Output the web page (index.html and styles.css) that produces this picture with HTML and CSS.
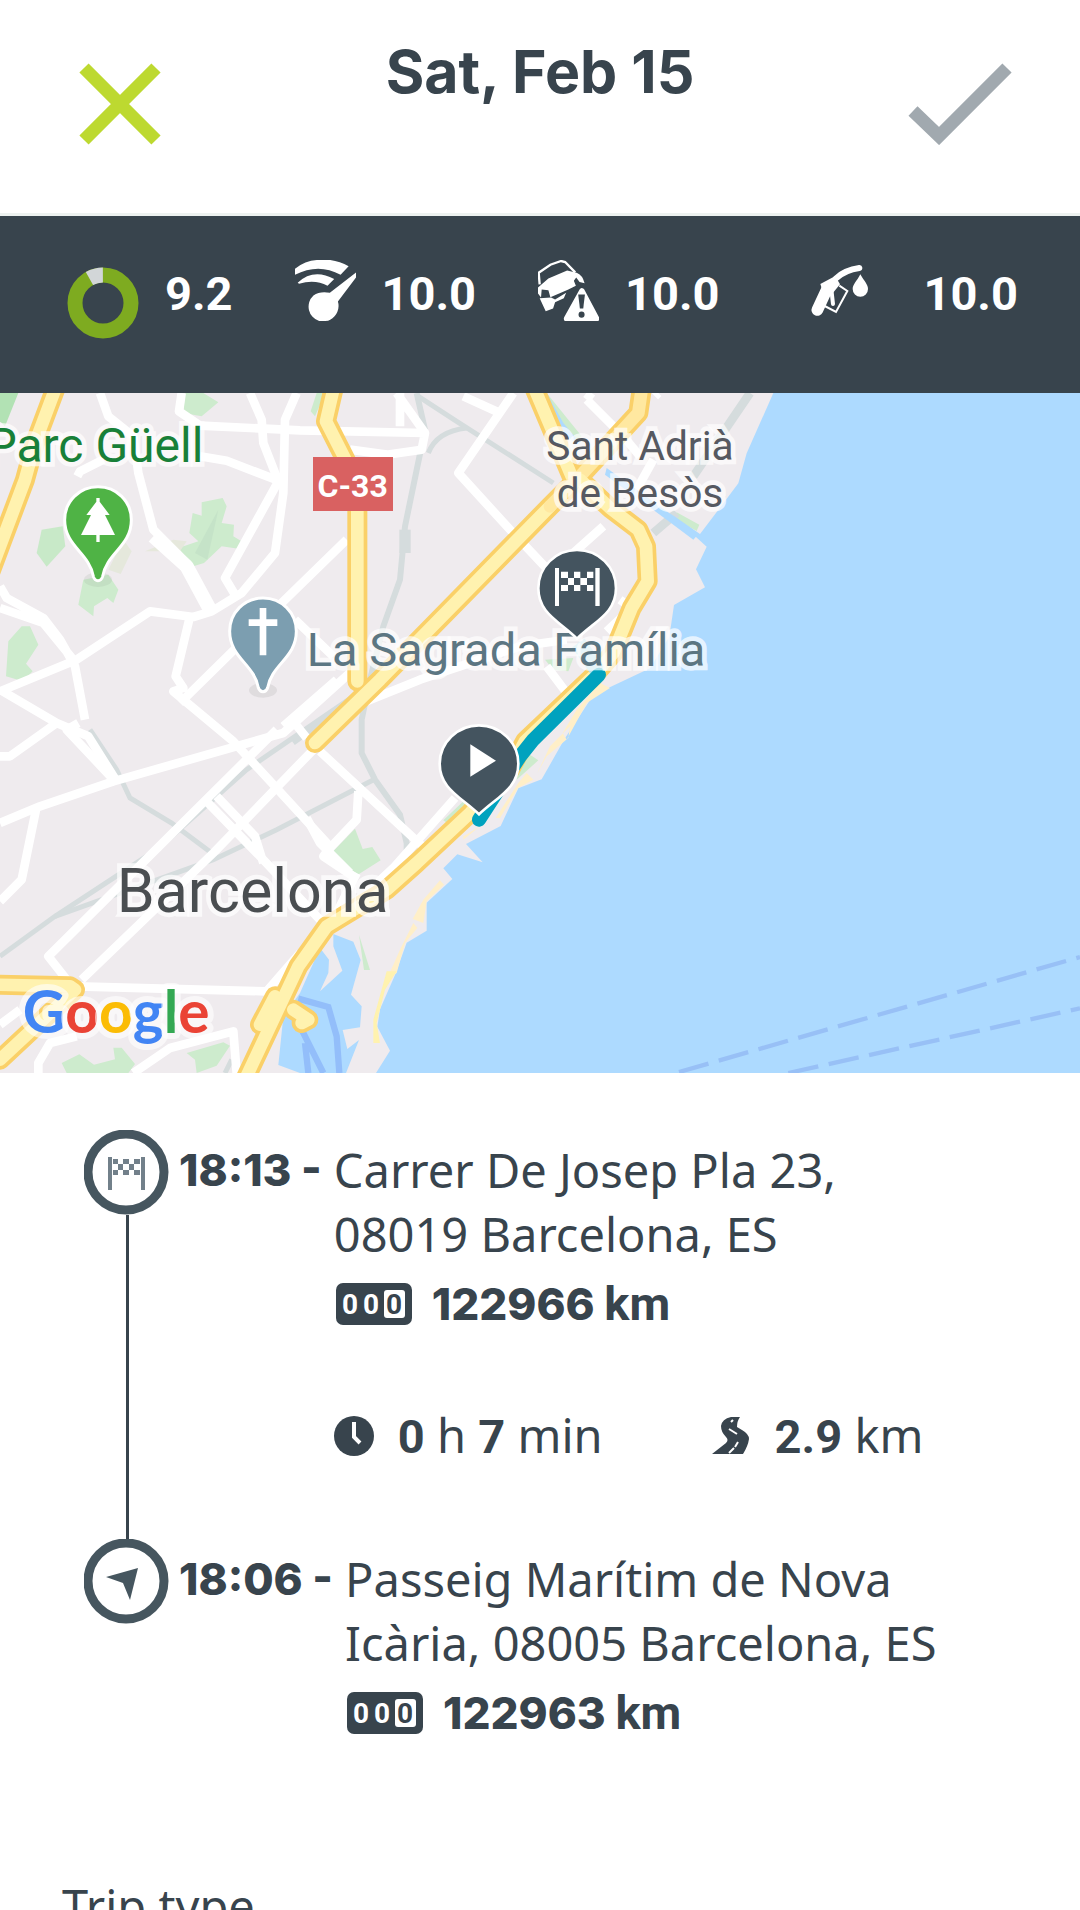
FILE: index.html
```html
<!DOCTYPE html>
<html lang="en">
<head>
  <meta charset="UTF-8">
  <meta name="viewport" content="width=device-width, initial-scale=1.0">
  <title>Sat, Feb 15</title>
  <link rel="stylesheet" href="styles.css">
</head>
<body>
  <div class="screen">

    <header class="topbar">
      <button class="icon-btn" type="button" aria-label="Close">
        <svg viewBox="0 0 104 82"><path d="M16 5L88 77M88 5L16 77" stroke="#bdd930" stroke-width="13" fill="none"/></svg>
      </button>
      <h1>Sat, Feb 15</h1>
      <button class="icon-btn" type="button" aria-label="Confirm">
        <svg viewBox="0 0 104 82"><path d="M5 48L31 73L99 5" stroke="#a1a9af" stroke-width="13" fill="none"/></svg>
      </button>
    </header>

    <section class="scores">
      <div class="score">
        <svg class="donut" viewBox="0 0 72 72">
          <circle cx="36" cy="36" r="28" fill="none" stroke="#7eab20" stroke-width="15"/>
          <circle cx="36" cy="36" r="28" fill="none" stroke="#d2d6d8" stroke-width="15" pathLength="100" stroke-dasharray="8 92" transform="rotate(-119 36 36)"/>
        </svg>
        <span>9.2</span>
      </div>
      <div class="score">
        <svg class="score-icon" viewBox="100 60 182 182" fill="#fff">
          <path d="M100 86Q130 62 165 60H205Q235 64 260 79L236 104Q170 68 100 104z"/>
          <path d="M108 128Q155 84 217 117L197 137Q160 117 112 131z"/>
          <path d="M282 97V112L228 184A46 46 0 0 1 205 238Q200 242 190 242H172A45 45 0 0 1 155 166Q175 152 204 158z"/>
        </svg>
        <span>10.0</span>
      </div>
      <div class="score">
        <svg class="score-icon" viewBox="831 60 182 182" fill="#fff">
          <path d="M836 133L833 98L868 74L900 63L912 66L942 97" fill="none" stroke="#fff" stroke-width="7"/>
          <path d="M831 142L862 115L918 91L946 98Q964 105 970 129L955 126L945 112L938 122L944 137L920 149L868 171L862 150L842 148L840 172L831 160z"/>
          <path d="M836 174L870 172L882 178L915 158L908 174L882 186L876 205L854 213z"/>
          <path d="M962 152L1006 235H916z" stroke="#fff" stroke-width="16" stroke-linejoin="round"/>
          <path d="M951 163H971L966 205H956z" fill="#38444d"/>
          <circle cx="961" cy="223" r="9" fill="#38444d"/>
        </svg>
        <span>10.0</span>
      </div>
      <div class="score">
        <svg class="fuel-icon" viewBox="3 60 348 183" fill="#fff">
          <path d="M112 210L142 145" stroke="#fff" stroke-width="35" stroke-linecap="round"/>
          <path d="M121 132L166 108L180 133L158 160L130 160z"/>
          <path d="M168 115Q195 90 238 84" fill="none" stroke="#fff" stroke-width="18" stroke-linecap="round"/>
          <path d="M178 137L202 153L168 216L134 198" fill="none" stroke="#fff" stroke-width="6"/>
          <path d="M154 148L159 192" fill="none" stroke="#fff" stroke-width="12" stroke-linecap="round"/>
          <path d="M241 103C253 124 264 134 264 147a23 23 0 0 1-46 0C218 134 230 124 241 103z"/>
        </svg>
        <span>10.0</span>
      </div>
    </section>

    <svg class="map" viewBox="0 0 3240 2040" role="img" aria-label="Trip route in Barcelona">
      <rect width="3240" height="2040" fill="#efebee"/>

      <!-- parks -->
      <g fill="#cdebcd">
        <path d="M0 0H55L15 100L0 85z" fill="#b2e2b4"/>
        <path d="M555 0H610L655 28L605 70L550 60z"/>
        <path d="M950 0H975L945 70L932 55z"/>
        <path d="M125 410L188 400L196 460L140 521L110 480z" fill="#c8e9c8"/>
        <path d="M605 328L668 315L680 340L665 390L702 395L700 430L733 450L715 467L665 460L612 510L580 520L535 465L595 445L568 420L578 360L605 368z"/>
        <path d="M655 350L622 500L585 480z" fill="#c5e3c8"/>
        <path d="M435 475L520 440L560 445L540 475z" fill="#e6e8dc"/>
        <path d="M370 440L395 475L362 543L325 530z" fill="#e5e8dc"/>
        <path d="M250 560L325 545L355 590L340 630L322 615L282 640L280 670L235 635z"/>
        <path d="M65 700H90L115 755L78 812L98 835L68 865L18 850L25 745z"/>
        <path d="M985 1390L1065 1307L1088 1368L1117 1362L1142 1402L1058 1455z"/>
        <path d="M185 2010L238 1984L282 2015L345 1999L340 1964H365L405 2013L385 2040H200z"/>
        <path d="M560 1980L670 1948L690 1958L650 2018L590 2040L585 2000z"/>
        <path d="M1077 1625L1110 1731H1092z"/>
        <path d="M1330 1282L1395 1220L1420 1245L1355 1300z"/>
        <path d="M1560 1110L1590 1085L1615 1102L1550 1160z"/>
        <path d="M2030 358L2098 395L2090 414L2020 375z"/>
        <path d="M1635 800L1720 795L1705 835L1660 830z"/>
        <path d="M1640 0L1745 130L1725 145L1640 20z"/>
      </g>

      <!-- railways -->
      <g fill="none" stroke="#d5dcdd" stroke-width="15">
        <path d="M1250 0L1275 110L1215 400L1200 560L1150 700L1110 860L1085 980V1080L1125 1160L1200 1265L1220 1350V1400" stroke-width="18"/>
        <path d="M1215 410V480" stroke-width="34"/>
        <path d="M1255 10L1370 85L1660 270"/>
        <path d="M1285 180Q1310 115 1400 105"/>
        <path d="M2250 0L2080 250M2030 360L1960 420" stroke-width="26"/>
        <path d="M0 1690L165 1570L470 1370L740 1130L1060 910"/>
        <path d="M165 1570L640 1400L830 1310L1125 1158"/>
        <path d="M270 1010L350 1130L390 1215L515 1290L655 1395"/>
        <path d="M880 1050L1060 920M675 2040L695 2000"/>
      </g>

      <!-- streets -->
      <g fill="none" stroke="#fff" stroke-width="26" stroke-linejoin="round">
        <path d="M300 0L325 70L400 130L415 240L460 410L560 510L630 650" />
        <path d="M460 430L560 520L630 650" stroke-width="42"/>
        <path d="M545 0L537 55L600 98L900 112L1275 120L1265 170L1160 185L1050 170"/>
        <path d="M750 0L785 80L790 150L835 265L675 555L705 605"/>
        <path d="M890 0L855 80L850 300L825 480L725 600L635 655L580 672L450 655L230 800L0 895"/>
        <path d="M600 190L680 203L840 265M232 250L240 235L310 200"/>
        <path d="M1040 440L850 625L540 930M570 670L527 850L550 885L520 895L700 1045L820 1175L985 1355"/>
        <path d="M1200 0V100M1190 0L1275 120M1390 10L1500 60"/>
        <path d="M1540 0L1375 240L1530 410L1700 590M1810 400L1720 480"/>
        <path d="M1760 20L1870 130L1920 190M1960 200L1910 290M1760 20L1775 0M1965 10L1975 0"/>
        <path d="M0 580L20 615L130 675L180 740L225 820L255 980M0 645L130 690L220 800M235 990L200 1010L350 1170"/>
        <path d="M0 890L170 990L265 1030L350 1165M170 990L30 1090H0M0 1290L120 1240L340 1165L850 1020L1060 830"/>
        <path d="M850 1000L1010 860M880 985L920 1035M1100 925L1260 860L1560 760L1700 740"/>
        <path d="M110 1240L65 1460L0 1525M830 1010L145 1690L200 1760M940 1070L640 1380L245 1760"/>
        <path d="M615 1220L780 1390L960 1580M650 1210L765 1330L790 1410M960 1075L1300 1390M1075 1195L1070 1280L985 1370L970 1390L1060 1450"/>
        <path d="M920 1275L960 1350L1050 1440M1365 1215L1180 1425L1100 1500M1070 1440L1000 1580M230 1780L800 1795L900 1680"/>
        <path d="M885 680L1000 790M1860 620L1895 645L1820 715M1640 820L1700 900M0 1895L60 1850M230 1930L150 1950L115 2010V2040M400 2040L510 1965L700 1915L710 2040"/>
      </g>

      <!-- sea, harbour and river -->
      <g fill="#addaff">
        <path d="M2320 0L2240 181L2215 271L2170 331L2100 423L2010 361L2120 461L2088 529L2115 583L2022 636L2008 731L1950 826L1780 906L1693 1039L1625 1159L1555 1186L1502 1299L1398 1353L1448 1408L1372 1384L1330 1426L1357 1458L1280 1529V1613L1220 1649L1185 1746L1140 1849L1132 1901L1170 1973L1128 2040H3240V0z"/>
        <path d="M1000 1623L1060 1646L1082 1701L1053 1805L1085 1840L1080 1903L1028 1911L1042 1968L1077 1941L1038 2040H900L835 2016L850 1870L900 1800L960 1665L987 1700L985 1740L960 1795L1027 1733L1000 1660z"/>
        <path d="M1628 0L1640 0L1690 90L1740 150L1725 155L1670 90zM1820 225L2000 355L2095 423L2080 440L2000 380L1815 245z"/>
      </g>
      <g fill="#ffefc8">
        <path d="M1710 1000L1650 1060L1612 1140L1640 1090L1705 1035zM1800 870L1830 885L1760 930L1700 1040L1688 1020L1730 950zM1555 1170L1580 1140L1600 1160L1555 1184L1500 1275H1487zM1390 1340L1390 1330L1440 1300zM1320 1462L1332 1475L1280 1525L1270 1590L1238 1578L1270 1520zM1240 1590L1252 1605L1215 1650L1190 1740L1160 1760L1200 1670z"/>
        <path d="M1160 1735H1190L1155 1790L1130 1890L1140 1950H1120V1880z" fill="#fff2af"/>
      </g>
      <path d="M895 1817L985 1842L1010 1930L1018 2040M905 1910L970 2040M915 1950L925 2040" fill="none" stroke="#93befa" stroke-width="19"/>
      <path d="M2037 2037L3240 1692M2365 2040L3240 1846" fill="none" stroke="#98c0f6" stroke-width="13" stroke-dasharray="92 32"/>

      <!-- motorways: casing, then fill -->
      <g fill="none" stroke="#fad068" stroke-width="60" stroke-linejoin="round" stroke-linecap="round">
        <path d="M165 -10L105 150L75 260L0 460L-30 540"/>
        <path d="M1000 -10L978 85L1072 270V865"/>
        <path d="M1605 -10L1715 250M1925 -10L1915 60L1740 250L1650 340L1140 860L945 1050"/>
        <path d="M1740 260L1830 345L1915 410L1938 460L1943 565L1895 645L1840 780L1780 850L1575 1045L1530 1130L1410 1260L1250 1410L1160 1490L980 1600L895 1720L735 2060"/>
        <path d="M-10 1775L210 1780L225 1790L0 2000"/>
        <path d="M825 1810L780 1895M880 1850L925 1880L905 1890"/>
      </g>
      <g fill="none" stroke="#fff2af" stroke-width="38" stroke-linejoin="round" stroke-linecap="round">
        <path d="M165 -10L105 150L75 260L0 460L-30 540"/>
        <path d="M1000 -10L978 85L1072 270V865"/>
        <path d="M1650 340L1140 860L945 1050M1605 -10L1715 250"/>
        <path d="M1925 -10L1915 60L1740 250L1650 340" stroke="#ffe8a0"/>
        <path d="M1740 260L1830 345L1915 410L1938 460L1943 565L1895 645L1840 780L1780 850L1575 1045L1530 1130L1410 1260L1250 1410L1160 1490L980 1600L895 1720L735 2060"/>
        <path d="M-10 1775L210 1780L225 1790L0 2000"/>
        <path d="M825 1810L780 1895M880 1850L925 1880L905 1890"/>
      </g>

      <!-- driven route, paler where it runs under the label -->
      <path d="M1735 750L1797 838" fill="none" stroke="#b2e1e9" stroke-width="46"/>
      <path d="M1797 845L1600 1040L1560 1090L1437 1280" fill="none" stroke="#00a2be" stroke-width="42" stroke-linecap="round" stroke-linejoin="round"/>

      <rect x="939" y="192" width="240" height="162" fill="#d96161"/>
      <text class="road-no" x="1058" y="311">C-33</text>

      <text class="label park" x="610" y="206">Parc Güell</text>
      <text class="label sight" x="920" y="818">La Sagrada Família</text>
      <text class="label town" x="1920" y="201">Sant Adrià</text>
      <text class="label town" x="1920" y="341">de Besòs</text>
      <text class="label city" x="350" y="1558">Barcelona</text>
      <text class="google" x="68" y="1919"><tspan fill="#4285f4">G</tspan><tspan fill="#ea4335">o</tspan><tspan fill="#fbbc05">o</tspan><tspan fill="#4285f4">g</tspan><tspan fill="#34a853">l</tspan><tspan fill="#ea4335">e</tspan></text>

      <!-- places -->
      <g stroke="#fff" stroke-width="9">
        <ellipse cx="294" cy="560" rx="42" ry="22" fill="#8a9a8a" opacity=".15" stroke="none"/>
        <path d="M294 281C238 281 194 325 194 381C194 460 268 480 280 550Q284 563 294 563T308 550C320 480 394 460 394 381C394 325 350 281 294 281z" fill="#4fb345"/>
        <path d="M289 315H299V326L329 366H315L345 426H299V447H289V426H243L273 366H259L289 326z" fill="#fff" stroke="none"/>
        <ellipse cx="789" cy="892" rx="42" ry="22" fill="#888" opacity=".15" stroke="none"/>
        <path d="M789 615C733 615 689 659 689 715C689 794 763 814 775 884Q779 896 789 896T803 884C815 814 889 794 889 715C889 659 845 615 789 615z" fill="#7c9eb0"/>
        <path d="M779 645H799V679H832V699H799V787H779V699H746V679H779z" fill="#fff" stroke="none"/>
      </g>

      <!-- trip end and start pins -->
      <g id="end-pin">
        <path d="M1731 471C1667 471 1615 522 1615 586C1615 661 1677 684 1731 737C1785 684 1848 661 1848 586C1848 522 1796 471 1731 471z" fill="#44545f" stroke="#fff" stroke-width="8"/>
        <path d="M1665 525H1677V639H1665zM1786 525H1799V639H1786zM1683 536H1704V555H1683zM1722 536H1741V555H1722zM1761 536H1780V555H1761zM1704 555H1722V576H1704zM1741 555H1761V576H1741zM1683 576H1704V594H1683zM1722 576H1741V594H1722zM1761 576H1780V594H1761z" fill="#fff"/>
      </g>
      <g id="start-pin">
        <path d="M1437 997C1373 997 1319 1048 1319 1112C1319 1187 1383 1212 1437 1264C1491 1212 1555 1187 1555 1112C1555 1048 1501 997 1437 997z" fill="#44545f" stroke="#fff" stroke-width="8"/>
        <path d="M1411 1054V1151L1488 1103z" fill="#fff"/>
      </g>
    </svg>

    <main class="trip">
      <div class="leg">
        <div class="rail">
          <svg class="rail-icon" viewBox="0 0 85 85">
            <circle cx="42" cy="42" r="38" fill="#fff" stroke="#46565f" stroke-width="9"/>
            <path d="M24 27h4v33h-4zM57 27h4v33h-4zM29 29h5v5h-5zM39 29h6v5h-6zM50 29h6v5h-6zM34 34h5v6h-5zM45 34h5v6h-5zM29 40h5v5h-5zM39 40h6v5h-6zM50 40h6v5h-6z" fill="#72808a"/>
          </svg>
          <div class="line"></div>
        </div>
        <div class="leg-body">
          <div class="time">18:13 -</div>
          <div class="place">
            <p class="address">Carrer De Josep Pla 23,<br>08019 Barcelona, ES</p>
            <div class="odometer">
              <svg class="odo-icon" viewBox="0 0 76 42">
                <rect width="76" height="42" rx="7" fill="#38444d"/>
                <rect x="48" y="7" width="21" height="28" rx="3" fill="#fff"/>
                <text x="14" y="31" fill="#fff">0</text><text x="35" y="31" fill="#fff">0</text><text x="58" y="31" fill="#38444d">0</text>
              </svg>
              <strong>122966 <span class="unit">km</span></strong>
            </div>
            <div class="stats">
              <div class="stat">
                <svg class="stat-icon" viewBox="0 0 40 40"><circle cx="20" cy="20" r="20" fill="#38444d"/><path d="M20 6V21L26 27" fill="none" stroke="#fff" stroke-width="4"/></svg>
                <span><b>0</b> h <b>7</b> min</span>
              </div>
              <div class="stat">
                <svg class="stat-icon" viewBox="0 0 40 40">
                  <path d="M29 1H20Q11 3 10 10Q10 16 15 21Q18 24 15 27L1 38H32Q37 30 38 23Q38 18 31 14L26 11Q26 5 29 1z" fill="#38444d"/>
                  <path d="M18 13L26 18M27 26L24 31M23 32L18 37M22 4L20 6" fill="none" stroke="#fff" stroke-width="2"/>
                </svg>
                <span><b>2.9</b> km</span>
              </div>
            </div>
          </div>
        </div>
      </div>

      <div class="leg">
        <div class="rail">
          <svg class="rail-icon" viewBox="0 0 85 85">
            <circle cx="42" cy="42" r="38" fill="#fff" stroke="#46565f" stroke-width="9"/>
            <path d="M54 29L22 38L39 44L46 61z" fill="#46565f"/>
          </svg>
        </div>
        <div class="leg-body">
          <div class="time">18:06 -</div>
          <div class="place">
            <p class="address">Passeig Marítim de Nova<br>Icària, 08005 Barcelona, ES</p>
            <div class="odometer">
              <svg class="odo-icon" viewBox="0 0 76 42">
                <rect width="76" height="42" rx="7" fill="#38444d"/>
                <rect x="48" y="7" width="21" height="28" rx="3" fill="#fff"/>
                <text x="14" y="31" fill="#fff">0</text><text x="35" y="31" fill="#fff">0</text><text x="58" y="31" fill="#38444d">0</text>
              </svg>
              <strong>122963 <span class="unit">km</span></strong>
            </div>
          </div>
        </div>
      </div>

      <h2>Trip type</h2>
    </main>
  </div>
</body>
</html>
```
FILE: styles.css
```css
* {
  box-sizing: border-box;
}

body {
  font-family: "Noto Sans", sans-serif;
  font-size: 47px;
  line-height: 64px;
  background: #fff;
  color: #38444d;
  margin: 0;
}

.screen {
  height: 100vh;
  overflow: hidden;
}

/* header */
.topbar {
  display: flex;
  justify-content: space-between;
  align-items: flex-start;
  height: 216px;
  padding: 40px 68px 0;
  border-bottom: 3px solid #edf2f0;
}

.topbar h1 {
  font-family: Inter, sans-serif;
  font-size: 59px;
  font-weight: 700;
  line-height: 64px;
  margin: 0;
}

.icon-btn {
  width: 104px;
  padding: 0;
  margin-top: 23px;
  border: none;
  background: none;
  cursor: pointer;
}

.icon-btn svg {
  display: block;
  width: 100%;
}

/* scores */
.scores {
  display: flex;
  justify-content: space-between;
  height: 177px;
  padding: 44px 62px 0 67px;
  background: #38444d;
  color: #fff;
}

.score {
  display: flex;
  align-items: flex-start;
  gap: 26px;
}

.score span {
  font-family: Roboto, sans-serif;
  font-weight: 700;
  line-height: 56px;
  margin-top: 6px;
}

.score-icon {
  width: 61px;
}

.fuel-icon {
  width: 116px;
}

.donut {
  width: 72px;
  margin-top: 7px;
}

/* map */
.map {
  display: block;
  width: 100%;
  font-family: Roboto, sans-serif;
}

.label {
  paint-order: stroke;
  stroke: rgba(255, 255, 255, 0.7);
  stroke-width: 28px;
}

.park {
  font-size: 144px;
  fill: #188038;
  text-anchor: end;
}

.sight {
  font-size: 141px;
  fill: #5c7682;
}

.town {
  font-size: 122px;
  fill: #565961;
  text-anchor: middle;
}

.city {
  font-size: 183px;
  fill: #4a4e51;
}

.road-no {
  font-size: 96px;
  font-weight: 700;
  fill: #fff;
  text-anchor: middle;
}

.google {
  font-family: Lato, sans-serif;
  font-size: 176px;
  font-weight: 700;
  paint-order: stroke;
  stroke: rgba(255, 255, 255, 0.6);
  stroke-width: 36px;
  stroke-linejoin: round;
}

/* trip */
.trip {
  padding: 57px 62px 0;
}

.leg {
  display: flex;
  gap: 10px;
  padding-left: 22px;
}

.rail {
  display: flex;
  flex-direction: column;
  width: 85px;
}

.rail-icon {
  width: 85px;
  height: 85px;
}

.line {
  flex: 1;
  width: 3px;
  margin-left: 42px;
  background: #38444d;
}

.leg-body {
  display: flex;
  gap: 12px;
  padding-top: 8px;
}

.time {
  font-family: Inter, sans-serif;
  font-size: 44px;
  font-weight: 800;
  white-space: nowrap;
}

.address {
  margin: 0;
}

.odometer {
  display: flex;
  align-items: center;
  gap: 20px;
  height: 48px;
  margin-top: 14px;
  padding-left: 2px;
}

.odo-icon {
  width: 76px;
  font-family: Roboto, sans-serif;
  font-size: 28px;
  font-weight: 700;
  text-anchor: middle;
}

.odometer strong {
  font-family: Inter, sans-serif;
  font-size: 44px;
  font-weight: 800;
}

.odometer .unit {
  font-family: Roboto, sans-serif;
  font-size: 47px;
  font-weight: 700;
}

.stats {
  display: flex;
  gap: 108px;
  margin-top: 75px;
  padding-bottom: 70px;
}

.stat {
  display: flex;
  align-items: center;
  gap: 24px;
}

.stat b {
  font-family: Roboto, sans-serif;
}

.stat-icon {
  width: 40px;
}

h2 {
  font-size: 47px;
  font-weight: 400;
  line-height: 64px;
  margin: 137px 0 0;
}
```
